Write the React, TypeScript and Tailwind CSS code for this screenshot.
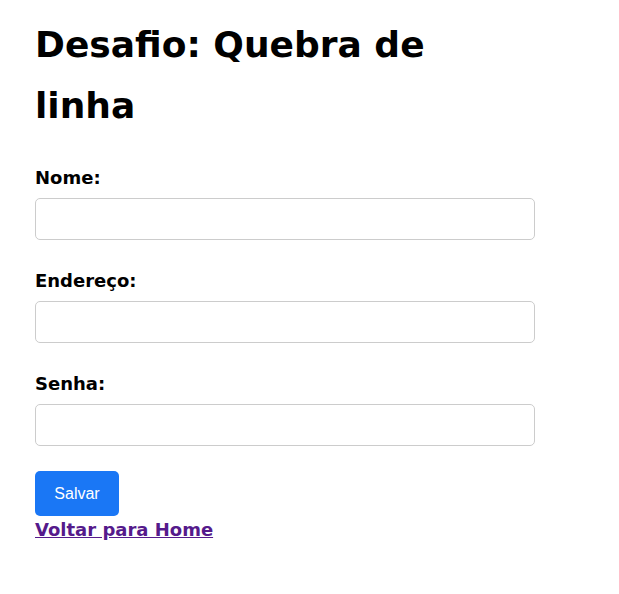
const fields = [
  { label: "Nome:", type: "text" },
  { label: "Endereço:", type: "text" },
  { label: "Senha:", type: "password" },
];

export default function App() {
  return (
    <div className="min-h-screen bg-white px-[35px] pt-[14px] font-['DejaVu_Sans',sans-serif] text-black">
      <h1 className="max-w-[440px] text-[36px] font-bold leading-[61px]">
        Desafio: Quebra de linha
      </h1>
      <form className="mt-[28px] w-[500px]" onSubmit={(e) => e.preventDefault()}>
        {fields.map((f) => (
          <div key={f.label} className="mb-[27px]">
            <label className="block text-[18px] font-bold leading-[27px]">
              {f.label}
            </label>
            <input
              type={f.type}
              className="mt-[7px] block h-[42px] w-[500px] rounded-[5px] border border-[#cccccc] bg-white px-2 outline-none"
            />
          </div>
        ))}
        <button
          type="submit"
          className="-mt-[2px] block h-[45px] w-[84px] rounded-[5px] bg-[#1a77f5] font-['Liberation_Sans',sans-serif] text-[16px] text-white"
        >
          Salvar
        </button>
      </form>
      <a
        href="#"
        className="block w-fit text-[18px] font-bold leading-[27px] text-[#551a8b] underline"
      >
        Voltar para Home
      </a>
    </div>
  );
}
